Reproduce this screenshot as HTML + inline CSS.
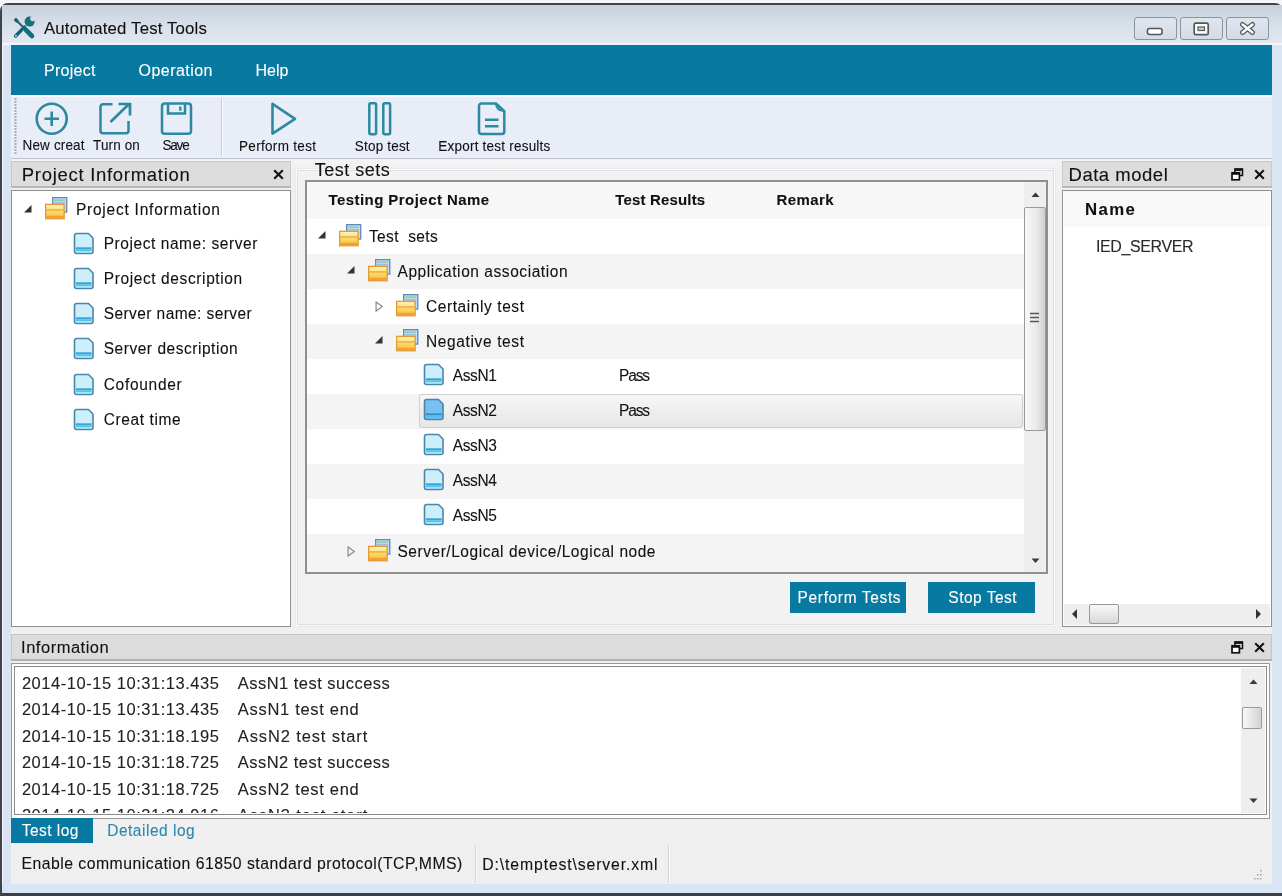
<!DOCTYPE html>
<html><head><meta charset="utf-8"><style>
html,body{margin:0;padding:0;width:1282px;height:896px;overflow:hidden;background:#f3f5f8}
body{position:relative;font-family:"Liberation Sans",sans-serif}
body div{position:absolute}
.t{white-space:pre;line-height:1}
</style></head><body>
<svg width="0" height="0" style="position:absolute"><defs><linearGradient id="fgr" x1="0" y1="0" x2="0" y2="1"><stop offset="0" stop-color="#fff4b8"/><stop offset="0.55" stop-color="#fbd860"/><stop offset="1" stop-color="#f5b840"/></linearGradient></defs></svg>
<div style="left:0px;top:0px;width:1282px;height:896px;background:#f3f5f8"></div>
<div style="left:0px;top:3px;width:1283px;height:900px;background:#dde7f3;border:2px solid #40454c;border-radius:8px 8px 0 0;box-sizing:border-box"></div>
<div style="left:2px;top:5px;width:1280px;height:40px;background:linear-gradient(#c6d0db,#d3dce6 35%,#e3e9f1)"></div>
<div style="left:2px;top:42.5px;width:1280px;height:2px;background:#f2f6fb"></div>
<div style="left:0px;top:893px;width:1282px;height:3px;background:#3c4048"></div>
<div style="left:2px;top:884px;width:1280px;height:9px;background:#d8e5f4"></div>
<svg style="position:absolute;left:8px;top:12px;" width="32" height="32" viewBox="0 0 32 32">
<defs><mask id="wm"><rect width="32" height="32" fill="#fff"/><circle cx="24.8" cy="6.6" r="2.6" fill="#000"/><path d="M24 5 L30 -1 L33 2 L27 8 Z" fill="#000"/></mask></defs>
<g stroke-linecap="round" fill="none">
<path d="M6.8 6.8 L9.6 9.6" stroke="#1d5f72" stroke-width="3.4" stroke-linecap="butt"/>
<path d="M9.5 9.5 L16.5 16.5" stroke="#1d6376" stroke-width="2"/>
<path d="M18 18 L24 24" stroke="#13707f" stroke-width="4.6"/>
<path d="M7.6 24 L16.5 15" stroke="#176478" stroke-width="3.4"/>
</g>
<circle cx="21.6" cy="9.6" r="5" fill="#17707f" mask="url(#wm)"/>
<path d="M16 13.5 L19 16.5 L17 18 L14.5 15.5Z" fill="#176478"/>
<circle cx="7.9" cy="23.7" r="0.9" fill="#cfe2ea"/>
</svg>
<div class="t" style="left:44.00px;top:20.58px;font-size:16.8px;letter-spacing:0.158px;font-weight:normal;color:#111;transform:scaleY(1.02);transform-origin:0 13.72px;-webkit-text-stroke:0.1px #111;">Automated Test Tools</div>
<div style="left:1134px;top:17px;width:43px;height:23px;background:linear-gradient(#dfe6ee,#d3dbe5);border:1px solid #8b939d;border-radius:3px;box-sizing:border-box"></div>
<div style="left:1180px;top:17px;width:43px;height:23px;background:linear-gradient(#dfe6ee,#d3dbe5);border:1px solid #8b939d;border-radius:3px;box-sizing:border-box"></div>
<div style="left:1226px;top:17px;width:43px;height:23px;background:linear-gradient(#dfe6ee,#d3dbe5);border:1px solid #8b939d;border-radius:3px;box-sizing:border-box"></div>
<svg style="position:absolute;left:1146px;top:27px;" width="18" height="9" viewBox="0 0 18 9"><rect x="1.5" y="1.5" width="14.5" height="6" rx="2" fill="#fff" stroke="#555" stroke-width="1.6"/></svg>
<svg style="position:absolute;left:1193px;top:22px;" width="17" height="14" viewBox="0 0 17 14"><rect x="1.2" y="1.2" width="14" height="11.5" rx="1.5" fill="#fff" stroke="#555" stroke-width="1.7"/><rect x="5" y="5" width="6.5" height="3.5" fill="#c9d0d8" stroke="#555" stroke-width="1.2"/></svg>
<svg style="position:absolute;left:1238px;top:21px;" width="19" height="15" viewBox="0 0 19 15"><path d="M4.5 3.5 L14.5 11.5 M14.5 3.5 L4.5 11.5" stroke="#5a5a5a" stroke-width="5" stroke-linecap="round"/><path d="M4.5 3.5 L14.5 11.5 M14.5 3.5 L4.5 11.5" stroke="#fff" stroke-width="2.4" stroke-linecap="round"/></svg>
<div style="left:11px;top:45px;width:1261px;height:50px;background:#0879a0"></div>
<div class="t" style="left:44.00px;top:62.96px;font-size:16px;letter-spacing:0.268px;font-weight:normal;color:#fff;transform:scaleY(1.02);transform-origin:0 13.04px;-webkit-text-stroke:0.1px #fff;">Project</div>
<div class="t" style="left:138.50px;top:62.96px;font-size:16px;letter-spacing:0.466px;font-weight:normal;color:#fff;transform:scaleY(1.02);transform-origin:0 13.04px;-webkit-text-stroke:0.1px #fff;">Operation</div>
<div class="t" style="left:255.40px;top:62.96px;font-size:16px;letter-spacing:0.029px;font-weight:normal;color:#fff;transform:scaleY(1.02);transform-origin:0 13.04px;-webkit-text-stroke:0.1px #fff;">Help</div>
<div style="left:11px;top:95px;width:1261px;height:63px;background:#e8edf8"></div>
<div style="left:11px;top:95px;width:1261px;height:1.5px;background:#f6f9fd"></div>
<div style="left:11px;top:157.5px;width:1261px;height:2px;background:#bfc4cc"></div>
<svg style="position:absolute;left:14px;top:98px;" width="4" height="58" viewBox="0 0 4 58"><rect x="0.5" y="0" width="2" height="2" fill="#a8adb4"/><rect x="0.5" y="3" width="2" height="2" fill="#a8adb4"/><rect x="0.5" y="6" width="2" height="2" fill="#a8adb4"/><rect x="0.5" y="9" width="2" height="2" fill="#a8adb4"/><rect x="0.5" y="12" width="2" height="2" fill="#a8adb4"/><rect x="0.5" y="15" width="2" height="2" fill="#a8adb4"/><rect x="0.5" y="18" width="2" height="2" fill="#a8adb4"/><rect x="0.5" y="21" width="2" height="2" fill="#a8adb4"/><rect x="0.5" y="24" width="2" height="2" fill="#a8adb4"/><rect x="0.5" y="27" width="2" height="2" fill="#a8adb4"/><rect x="0.5" y="30" width="2" height="2" fill="#a8adb4"/><rect x="0.5" y="33" width="2" height="2" fill="#a8adb4"/><rect x="0.5" y="36" width="2" height="2" fill="#a8adb4"/><rect x="0.5" y="39" width="2" height="2" fill="#a8adb4"/><rect x="0.5" y="42" width="2" height="2" fill="#a8adb4"/><rect x="0.5" y="45" width="2" height="2" fill="#a8adb4"/><rect x="0.5" y="48" width="2" height="2" fill="#a8adb4"/><rect x="0.5" y="51" width="2" height="2" fill="#a8adb4"/><rect x="0.5" y="54" width="2" height="2" fill="#a8adb4"/></svg>
<div style="left:221px;top:98px;width:1px;height:58px;background:#c6ccd5"></div>
<div style="left:222px;top:98px;width:1px;height:58px;background:#fbfcff"></div>
<svg style="position:absolute;left:34px;top:101px;" width="36" height="36" viewBox="0 0 36 36"><circle cx="17.7" cy="17.8" r="15" fill="none" stroke="#2b8aa0" stroke-width="2.6"/><path d="M17.7 10.5 V25 M10.5 17.8 H25" stroke="#2b8aa0" stroke-width="2.6"/></svg>
<svg style="position:absolute;left:97px;top:101px;" width="38" height="36" viewBox="0 0 38 36"><path d="M15.5 3.2 H6 a2.5 2.5 0 0 0 -2.5 2.5 V29.8 a2.5 2.5 0 0 0 2.5 2.5 H29 a2.5 2.5 0 0 0 2.5 -2.5 V20" fill="none" stroke="#2b8aa0" stroke-width="2.5"/><path d="M13.5 21 L31.5 3.5 M21.5 3 H33 V14.5" fill="none" stroke="#2b8aa0" stroke-width="2.7"/></svg>
<svg style="position:absolute;left:158px;top:101px;" width="36" height="36" viewBox="0 0 36 36"><rect x="4" y="2.5" width="29" height="30.2" rx="2.8" fill="none" stroke="#2b8aa0" stroke-width="2.5"/><path d="M10 2.8 V12.5 H27 V2.8" fill="none" stroke="#2b8aa0" stroke-width="2.5"/><path d="M22.3 5.5 V9.8" stroke="#2b8aa0" stroke-width="2.3"/></svg>
<svg style="position:absolute;left:268px;top:100px;" width="32" height="38" viewBox="0 0 32 38"><path d="M4.5 3.8 L27 18.8 L4.5 33.6 Z" fill="none" stroke="#2b8aa0" stroke-width="2.6" stroke-linejoin="round"/></svg>
<svg style="position:absolute;left:366px;top:100px;" width="28" height="38" viewBox="0 0 28 38"><rect x="3.3" y="3.3" width="6.8" height="31" rx="1.5" fill="none" stroke="#2b8aa0" stroke-width="2.5"/><rect x="17.3" y="3.3" width="6.8" height="31" rx="1.5" fill="none" stroke="#2b8aa0" stroke-width="2.5"/></svg>
<svg style="position:absolute;left:476px;top:100px;" width="32" height="38" viewBox="0 0 32 38"><path d="M5.5 3.5 H20 L28.3 11.2 V31.5 a2.5 2.5 0 0 1 -2.5 2.5 H5.5 a2.5 2.5 0 0 1 -2.5 -2.5 V6 a2.5 2.5 0 0 1 2.5 -2.5 Z" fill="none" stroke="#2b8aa0" stroke-width="2.5" stroke-linejoin="round"/><path d="M20 4 Q20.5 10.5 28 11" fill="none" stroke="#2b8aa0" stroke-width="2"/><path d="M9 19.8 H22.5 M9 26.2 H22.5" stroke="#2b8aa0" stroke-width="2.4"/></svg>
<div class="t" style="left:22.50px;top:138.67px;font-size:13.5px;letter-spacing:0.155px;font-weight:normal;color:#111;transform:scaleY(1.02);transform-origin:0 10.93px;-webkit-text-stroke:0.1px #111;">New creat</div>
<div class="t" style="left:93.00px;top:138.67px;font-size:13.5px;letter-spacing:0.130px;font-weight:normal;color:#111;transform:scaleY(1.02);transform-origin:0 10.93px;-webkit-text-stroke:0.1px #111;">Turn on</div>
<div class="t" style="left:162.40px;top:138.67px;font-size:13.5px;letter-spacing:-1.155px;font-weight:normal;color:#111;transform:scaleY(1.02);transform-origin:0 10.93px;-webkit-text-stroke:0.1px #111;">Save</div>
<div class="t" style="left:239.00px;top:140.07px;font-size:13.5px;letter-spacing:0.316px;font-weight:normal;color:#111;transform:scaleY(1.02);transform-origin:0 10.93px;-webkit-text-stroke:0.1px #111;">Perform test</div>
<div class="t" style="left:354.80px;top:140.07px;font-size:13.5px;letter-spacing:0.189px;font-weight:normal;color:#111;transform:scaleY(1.02);transform-origin:0 10.93px;-webkit-text-stroke:0.1px #111;">Stop test</div>
<div class="t" style="left:438.30px;top:140.07px;font-size:13.5px;letter-spacing:0.220px;font-weight:normal;color:#111;transform:scaleY(1.02);transform-origin:0 10.93px;-webkit-text-stroke:0.1px #111;">Export test results</div>
<div style="left:11px;top:159px;width:1261px;height:725px;background:#f0f0f0"></div>
<div style="left:11px;top:159.5px;width:1261px;height:9px;background:linear-gradient(#f3f4f7,#f0f1f3)"></div>
<div style="left:11px;top:161px;width:280px;height:26px;background:#dedcdc;border:1px solid #c8c8c8;box-sizing:border-box"></div>
<div style="left:11px;top:186px;width:280px;height:1.5px;background:#b8b8b8"></div>
<div class="t" style="left:21.80px;top:165.64px;font-size:18.5px;letter-spacing:0.707px;font-weight:normal;color:#111;transform:scaleY(1.02);transform-origin:0 15.16px;-webkit-text-stroke:0.1px #111;">Project Information</div>
<svg style="position:absolute;left:273px;top:169px;" width="11" height="11" viewBox="0 0 11 11"><path d="M1.2 1.2 L9.8 9.8 M9.8 1.2 L1.2 9.8" stroke="#111" stroke-width="2.1" fill="none"/></svg>
<div style="left:11px;top:190px;width:280px;height:437px;background:#fff;border:1.5px solid #8f8f8f;box-sizing:border-box"></div>
<svg style="position:absolute;left:23px;top:204px;" width="10" height="10" viewBox="0 0 10 10"><path d="M8.5 1 L8.5 8.5 L1 8.5 Z" fill="#333"/></svg>
<svg style="position:absolute;left:44px;top:196px;" width="24" height="24" viewBox="0 0 24 24">
<rect x="8.65" y="1.65" width="14.1" height="14.4" fill="#c6e2f8" stroke="#5f88b8" stroke-width="1.3"/>
<rect x="10" y="3.3" width="11.2" height="1.9" fill="#8fd0a8"/>
<rect x="10" y="6.2" width="11.2" height="1.3" fill="#90b4ea"/>
<rect x="10" y="8.6" width="11.2" height="1.3" fill="#90b4ea"/>
<rect x="1.65" y="8.35" width="18.5" height="14.4" fill="url(#fgr)" stroke="#e39a36" stroke-width="1.3"/>
<rect x="2.3" y="13.2" width="17.2" height="1.5" fill="#e8a040" opacity="0.8"/>
<rect x="2.3" y="19.8" width="17.2" height="2.3" fill="#f4a030"/>
</svg>
<div class="t" style="left:75.90px;top:202.08px;font-size:15.5px;letter-spacing:0.773px;font-weight:normal;color:#111;transform:scaleY(1.02);transform-origin:0 12.62px;-webkit-text-stroke:0.1px #111;">Project Information</div>
<svg style="position:absolute;left:73px;top:231.8px;" width="22" height="24" viewBox="0 0 22 24">
<path d="M3.5 1.5 H15.5 L20 6 V19.5 a2 2 0 0 1 -2 2 H3.5 a2 2 0 0 1 -2 -2 V3.5 a2 2 0 0 1 2 -2 Z" fill="#cdeefb" stroke="#4a86a8" stroke-width="1.6" stroke-linejoin="round"/>
<rect x="2.8" y="15.3" width="15.8" height="2" fill="#36a4d6"/>
<rect x="2.8" y="17.3" width="15.8" height="2" fill="#4cc6f0"/>
</svg>
<div class="t" style="left:103.70px;top:236.18px;font-size:15.5px;letter-spacing:0.563px;font-weight:normal;color:#111;transform:scaleY(1.02);transform-origin:0 12.62px;-webkit-text-stroke:0.1px #111;">Project name: server</div>
<svg style="position:absolute;left:73px;top:266.7px;" width="22" height="24" viewBox="0 0 22 24">
<path d="M3.5 1.5 H15.5 L20 6 V19.5 a2 2 0 0 1 -2 2 H3.5 a2 2 0 0 1 -2 -2 V3.5 a2 2 0 0 1 2 -2 Z" fill="#cdeefb" stroke="#4a86a8" stroke-width="1.6" stroke-linejoin="round"/>
<rect x="2.8" y="15.3" width="15.8" height="2" fill="#36a4d6"/>
<rect x="2.8" y="17.3" width="15.8" height="2" fill="#4cc6f0"/>
</svg>
<div class="t" style="left:103.70px;top:271.08px;font-size:15.5px;letter-spacing:0.611px;font-weight:normal;color:#111;transform:scaleY(1.02);transform-origin:0 12.62px;-webkit-text-stroke:0.1px #111;">Project description</div>
<svg style="position:absolute;left:73px;top:301.8px;" width="22" height="24" viewBox="0 0 22 24">
<path d="M3.5 1.5 H15.5 L20 6 V19.5 a2 2 0 0 1 -2 2 H3.5 a2 2 0 0 1 -2 -2 V3.5 a2 2 0 0 1 2 -2 Z" fill="#cdeefb" stroke="#4a86a8" stroke-width="1.6" stroke-linejoin="round"/>
<rect x="2.8" y="15.3" width="15.8" height="2" fill="#36a4d6"/>
<rect x="2.8" y="17.3" width="15.8" height="2" fill="#4cc6f0"/>
</svg>
<div class="t" style="left:103.70px;top:306.18px;font-size:15.5px;letter-spacing:0.421px;font-weight:normal;color:#111;transform:scaleY(1.02);transform-origin:0 12.62px;-webkit-text-stroke:0.1px #111;">Server name: server</div>
<svg style="position:absolute;left:73px;top:337px;" width="22" height="24" viewBox="0 0 22 24">
<path d="M3.5 1.5 H15.5 L20 6 V19.5 a2 2 0 0 1 -2 2 H3.5 a2 2 0 0 1 -2 -2 V3.5 a2 2 0 0 1 2 -2 Z" fill="#cdeefb" stroke="#4a86a8" stroke-width="1.6" stroke-linejoin="round"/>
<rect x="2.8" y="15.3" width="15.8" height="2" fill="#36a4d6"/>
<rect x="2.8" y="17.3" width="15.8" height="2" fill="#4cc6f0"/>
</svg>
<div class="t" style="left:103.70px;top:341.38px;font-size:15.5px;letter-spacing:0.534px;font-weight:normal;color:#111;transform:scaleY(1.02);transform-origin:0 12.62px;-webkit-text-stroke:0.1px #111;">Server description</div>
<svg style="position:absolute;left:73px;top:372.5px;" width="22" height="24" viewBox="0 0 22 24">
<path d="M3.5 1.5 H15.5 L20 6 V19.5 a2 2 0 0 1 -2 2 H3.5 a2 2 0 0 1 -2 -2 V3.5 a2 2 0 0 1 2 -2 Z" fill="#cdeefb" stroke="#4a86a8" stroke-width="1.6" stroke-linejoin="round"/>
<rect x="2.8" y="15.3" width="15.8" height="2" fill="#36a4d6"/>
<rect x="2.8" y="17.3" width="15.8" height="2" fill="#4cc6f0"/>
</svg>
<div class="t" style="left:103.70px;top:376.88px;font-size:15.5px;letter-spacing:0.702px;font-weight:normal;color:#111;transform:scaleY(1.02);transform-origin:0 12.62px;-webkit-text-stroke:0.1px #111;">Cofounder</div>
<svg style="position:absolute;left:73px;top:407.7px;" width="22" height="24" viewBox="0 0 22 24">
<path d="M3.5 1.5 H15.5 L20 6 V19.5 a2 2 0 0 1 -2 2 H3.5 a2 2 0 0 1 -2 -2 V3.5 a2 2 0 0 1 2 -2 Z" fill="#cdeefb" stroke="#4a86a8" stroke-width="1.6" stroke-linejoin="round"/>
<rect x="2.8" y="15.3" width="15.8" height="2" fill="#36a4d6"/>
<rect x="2.8" y="17.3" width="15.8" height="2" fill="#4cc6f0"/>
</svg>
<div class="t" style="left:103.70px;top:412.08px;font-size:15.5px;letter-spacing:0.613px;font-weight:normal;color:#111;transform:scaleY(1.02);transform-origin:0 12.62px;-webkit-text-stroke:0.1px #111;">Creat time</div>
<div style="left:296px;top:168.5px;width:759px;height:457px;background:#f2f2f2;border:1.5px solid #fbfbfb;box-shadow:inset 1px 1px 0 #dedede, inset -1px -1px 0 #dedede, 0 0 0 0.5px #e4e4e4;box-sizing:border-box"></div>
<div class="t" style="left:314.80px;top:161.06px;font-size:18px;letter-spacing:0.496px;font-weight:normal;color:#111;transform:scaleY(1.02);transform-origin:0 14.74px;-webkit-text-stroke:0.1px #111;">Test sets</div>
<div style="left:305px;top:180px;width:743px;height:394px;background:#fff;border:2px solid #8f8f8f;box-sizing:border-box"></div>
<div style="left:307px;top:182px;width:717px;height:37px;background:#f7f7f7"></div>
<div class="t" style="left:328.40px;top:191.70px;font-size:15px;letter-spacing:0.449px;font-weight:bold;color:#111;transform:scaleY(1.02);transform-origin:0 12.20px;-webkit-text-stroke:0.1px #111;">Testing Project Name</div>
<div class="t" style="left:615.20px;top:191.70px;font-size:15px;letter-spacing:0.175px;font-weight:bold;color:#111;transform:scaleY(1.02);transform-origin:0 12.20px;-webkit-text-stroke:0.1px #111;">Test Results</div>
<div class="t" style="left:776.50px;top:191.70px;font-size:15px;letter-spacing:0.387px;font-weight:bold;color:#111;transform:scaleY(1.02);transform-origin:0 12.20px;-webkit-text-stroke:0.1px #111;">Remark</div>
<div style="left:307px;top:219px;width:717px;height:35px;background:#ffffff"></div>
<div style="left:307px;top:254px;width:717px;height:35px;background:#f4f4f4"></div>
<div style="left:307px;top:289px;width:717px;height:35px;background:#ffffff"></div>
<div style="left:307px;top:324px;width:717px;height:35px;background:#f4f4f4"></div>
<div style="left:307px;top:359px;width:717px;height:35px;background:#ffffff"></div>
<div style="left:307px;top:394px;width:717px;height:35px;background:#f4f4f4"></div>
<div style="left:307px;top:429px;width:717px;height:35px;background:#ffffff"></div>
<div style="left:307px;top:464px;width:717px;height:35px;background:#f4f4f4"></div>
<div style="left:307px;top:499px;width:717px;height:35px;background:#ffffff"></div>
<div style="left:307px;top:534px;width:717px;height:38px;background:#f4f4f4"></div>
<div style="left:419px;top:394px;width:604px;height:34px;background:linear-gradient(#f6f6f6,#e6e6e6);border:1px solid #d0d0d0;border-radius:3px;box-sizing:border-box"></div>
<svg style="position:absolute;left:317.0px;top:230px;" width="10" height="10" viewBox="0 0 10 10"><path d="M8.5 1 L8.5 8.5 L1 8.5 Z" fill="#333"/></svg>
<svg style="position:absolute;left:338.0px;top:223px;" width="24" height="24" viewBox="0 0 24 24">
<rect x="8.65" y="1.65" width="14.1" height="14.4" fill="#c6e2f8" stroke="#5f88b8" stroke-width="1.3"/>
<rect x="10" y="3.3" width="11.2" height="1.9" fill="#8fd0a8"/>
<rect x="10" y="6.2" width="11.2" height="1.3" fill="#90b4ea"/>
<rect x="10" y="8.6" width="11.2" height="1.3" fill="#90b4ea"/>
<rect x="1.65" y="8.35" width="18.5" height="14.4" fill="url(#fgr)" stroke="#e39a36" stroke-width="1.3"/>
<rect x="2.3" y="13.2" width="17.2" height="1.5" fill="#e8a040" opacity="0.8"/>
<rect x="2.3" y="19.8" width="17.2" height="2.3" fill="#f4a030"/>
</svg>
<div class="t" style="left:369.00px;top:229.08px;font-size:15.5px;letter-spacing:0.359px;font-weight:normal;color:#111;transform:scaleY(1.02);transform-origin:0 12.62px;-webkit-text-stroke:0.1px #111;">Test  sets</div>
<svg style="position:absolute;left:345.5px;top:265px;" width="10" height="10" viewBox="0 0 10 10"><path d="M8.5 1 L8.5 8.5 L1 8.5 Z" fill="#333"/></svg>
<svg style="position:absolute;left:366.5px;top:258px;" width="24" height="24" viewBox="0 0 24 24">
<rect x="8.65" y="1.65" width="14.1" height="14.4" fill="#c6e2f8" stroke="#5f88b8" stroke-width="1.3"/>
<rect x="10" y="3.3" width="11.2" height="1.9" fill="#8fd0a8"/>
<rect x="10" y="6.2" width="11.2" height="1.3" fill="#90b4ea"/>
<rect x="10" y="8.6" width="11.2" height="1.3" fill="#90b4ea"/>
<rect x="1.65" y="8.35" width="18.5" height="14.4" fill="url(#fgr)" stroke="#e39a36" stroke-width="1.3"/>
<rect x="2.3" y="13.2" width="17.2" height="1.5" fill="#e8a040" opacity="0.8"/>
<rect x="2.3" y="19.8" width="17.2" height="2.3" fill="#f4a030"/>
</svg>
<div class="t" style="left:397.50px;top:264.08px;font-size:15.5px;letter-spacing:0.560px;font-weight:normal;color:#111;transform:scaleY(1.02);transform-origin:0 12.62px;-webkit-text-stroke:0.1px #111;">Application association</div>
<svg style="position:absolute;left:375.0px;top:301px;" width="10" height="12" viewBox="0 0 10 12"><path d="M1.1 1 L7.3 5.5 L1.1 10 Z" fill="none" stroke="#8a8a8a" stroke-width="1.2"/></svg>
<svg style="position:absolute;left:395.0px;top:293px;" width="24" height="24" viewBox="0 0 24 24">
<rect x="8.65" y="1.65" width="14.1" height="14.4" fill="#c6e2f8" stroke="#5f88b8" stroke-width="1.3"/>
<rect x="10" y="3.3" width="11.2" height="1.9" fill="#8fd0a8"/>
<rect x="10" y="6.2" width="11.2" height="1.3" fill="#90b4ea"/>
<rect x="10" y="8.6" width="11.2" height="1.3" fill="#90b4ea"/>
<rect x="1.65" y="8.35" width="18.5" height="14.4" fill="url(#fgr)" stroke="#e39a36" stroke-width="1.3"/>
<rect x="2.3" y="13.2" width="17.2" height="1.5" fill="#e8a040" opacity="0.8"/>
<rect x="2.3" y="19.8" width="17.2" height="2.3" fill="#f4a030"/>
</svg>
<div class="t" style="left:426.00px;top:299.08px;font-size:15.5px;letter-spacing:0.581px;font-weight:normal;color:#111;transform:scaleY(1.02);transform-origin:0 12.62px;-webkit-text-stroke:0.1px #111;">Certainly test</div>
<svg style="position:absolute;left:374.0px;top:335px;" width="10" height="10" viewBox="0 0 10 10"><path d="M8.5 1 L8.5 8.5 L1 8.5 Z" fill="#333"/></svg>
<svg style="position:absolute;left:395.0px;top:328px;" width="24" height="24" viewBox="0 0 24 24">
<rect x="8.65" y="1.65" width="14.1" height="14.4" fill="#c6e2f8" stroke="#5f88b8" stroke-width="1.3"/>
<rect x="10" y="3.3" width="11.2" height="1.9" fill="#8fd0a8"/>
<rect x="10" y="6.2" width="11.2" height="1.3" fill="#90b4ea"/>
<rect x="10" y="8.6" width="11.2" height="1.3" fill="#90b4ea"/>
<rect x="1.65" y="8.35" width="18.5" height="14.4" fill="url(#fgr)" stroke="#e39a36" stroke-width="1.3"/>
<rect x="2.3" y="13.2" width="17.2" height="1.5" fill="#e8a040" opacity="0.8"/>
<rect x="2.3" y="19.8" width="17.2" height="2.3" fill="#f4a030"/>
</svg>
<div class="t" style="left:426.00px;top:334.08px;font-size:15.5px;letter-spacing:0.629px;font-weight:normal;color:#111;transform:scaleY(1.02);transform-origin:0 12.62px;-webkit-text-stroke:0.1px #111;">Negative test</div>
<svg style="position:absolute;left:423px;top:363px;" width="22" height="24" viewBox="0 0 22 24">
<path d="M3.5 1.5 H15.5 L20 6 V19.5 a2 2 0 0 1 -2 2 H3.5 a2 2 0 0 1 -2 -2 V3.5 a2 2 0 0 1 2 -2 Z" fill="#cdeefb" stroke="#4a86a8" stroke-width="1.6" stroke-linejoin="round"/>
<rect x="2.8" y="15.3" width="15.8" height="2" fill="#36a4d6"/>
<rect x="2.8" y="17.3" width="15.8" height="2" fill="#4cc6f0"/>
</svg>
<div class="t" style="left:452.70px;top:368.38px;font-size:15.5px;letter-spacing:-0.337px;font-weight:normal;color:#111;transform:scaleY(1.02);transform-origin:0 12.62px;-webkit-text-stroke:0.1px #111;">AssN1</div>
<div class="t" style="left:619.00px;top:368.38px;font-size:15.5px;letter-spacing:-1.152px;font-weight:normal;color:#111;transform:scaleY(1.02);transform-origin:0 12.62px;-webkit-text-stroke:0.1px #111;">Pass</div>
<svg style="position:absolute;left:423px;top:398px;" width="22" height="24" viewBox="0 0 22 24">
<path d="M3.5 1.5 H15.5 L20 6 V19.5 a2 2 0 0 1 -2 2 H3.5 a2 2 0 0 1 -2 -2 V3.5 a2 2 0 0 1 2 -2 Z" fill="#78c0f0" stroke="#4a86a8" stroke-width="1.6" stroke-linejoin="round"/>
<rect x="2.8" y="15.3" width="15.8" height="2" fill="#2f8fcc"/>
<rect x="2.8" y="17.3" width="15.8" height="2" fill="#4cc0f2"/>
</svg>
<div class="t" style="left:452.70px;top:403.38px;font-size:15.5px;letter-spacing:-0.337px;font-weight:normal;color:#111;transform:scaleY(1.02);transform-origin:0 12.62px;-webkit-text-stroke:0.1px #111;">AssN2</div>
<div class="t" style="left:619.00px;top:403.38px;font-size:15.5px;letter-spacing:-1.152px;font-weight:normal;color:#111;transform:scaleY(1.02);transform-origin:0 12.62px;-webkit-text-stroke:0.1px #111;">Pass</div>
<svg style="position:absolute;left:423px;top:433px;" width="22" height="24" viewBox="0 0 22 24">
<path d="M3.5 1.5 H15.5 L20 6 V19.5 a2 2 0 0 1 -2 2 H3.5 a2 2 0 0 1 -2 -2 V3.5 a2 2 0 0 1 2 -2 Z" fill="#cdeefb" stroke="#4a86a8" stroke-width="1.6" stroke-linejoin="round"/>
<rect x="2.8" y="15.3" width="15.8" height="2" fill="#36a4d6"/>
<rect x="2.8" y="17.3" width="15.8" height="2" fill="#4cc6f0"/>
</svg>
<div class="t" style="left:452.70px;top:438.38px;font-size:15.5px;letter-spacing:-0.337px;font-weight:normal;color:#111;transform:scaleY(1.02);transform-origin:0 12.62px;-webkit-text-stroke:0.1px #111;">AssN3</div>
<svg style="position:absolute;left:423px;top:468px;" width="22" height="24" viewBox="0 0 22 24">
<path d="M3.5 1.5 H15.5 L20 6 V19.5 a2 2 0 0 1 -2 2 H3.5 a2 2 0 0 1 -2 -2 V3.5 a2 2 0 0 1 2 -2 Z" fill="#cdeefb" stroke="#4a86a8" stroke-width="1.6" stroke-linejoin="round"/>
<rect x="2.8" y="15.3" width="15.8" height="2" fill="#36a4d6"/>
<rect x="2.8" y="17.3" width="15.8" height="2" fill="#4cc6f0"/>
</svg>
<div class="t" style="left:452.70px;top:473.38px;font-size:15.5px;letter-spacing:-0.337px;font-weight:normal;color:#111;transform:scaleY(1.02);transform-origin:0 12.62px;-webkit-text-stroke:0.1px #111;">AssN4</div>
<svg style="position:absolute;left:423px;top:503px;" width="22" height="24" viewBox="0 0 22 24">
<path d="M3.5 1.5 H15.5 L20 6 V19.5 a2 2 0 0 1 -2 2 H3.5 a2 2 0 0 1 -2 -2 V3.5 a2 2 0 0 1 2 -2 Z" fill="#cdeefb" stroke="#4a86a8" stroke-width="1.6" stroke-linejoin="round"/>
<rect x="2.8" y="15.3" width="15.8" height="2" fill="#36a4d6"/>
<rect x="2.8" y="17.3" width="15.8" height="2" fill="#4cc6f0"/>
</svg>
<div class="t" style="left:452.70px;top:508.38px;font-size:15.5px;letter-spacing:-0.337px;font-weight:normal;color:#111;transform:scaleY(1.02);transform-origin:0 12.62px;-webkit-text-stroke:0.1px #111;">AssN5</div>
<svg style="position:absolute;left:346.5px;top:546px;" width="10" height="12" viewBox="0 0 10 12"><path d="M1.1 1 L7.3 5.5 L1.1 10 Z" fill="none" stroke="#8a8a8a" stroke-width="1.2"/></svg>
<svg style="position:absolute;left:366.5px;top:538px;" width="24" height="24" viewBox="0 0 24 24">
<rect x="8.65" y="1.65" width="14.1" height="14.4" fill="#c6e2f8" stroke="#5f88b8" stroke-width="1.3"/>
<rect x="10" y="3.3" width="11.2" height="1.9" fill="#8fd0a8"/>
<rect x="10" y="6.2" width="11.2" height="1.3" fill="#90b4ea"/>
<rect x="10" y="8.6" width="11.2" height="1.3" fill="#90b4ea"/>
<rect x="1.65" y="8.35" width="18.5" height="14.4" fill="url(#fgr)" stroke="#e39a36" stroke-width="1.3"/>
<rect x="2.3" y="13.2" width="17.2" height="1.5" fill="#e8a040" opacity="0.8"/>
<rect x="2.3" y="19.8" width="17.2" height="2.3" fill="#f4a030"/>
</svg>
<div class="t" style="left:397.50px;top:544.08px;font-size:15.5px;letter-spacing:0.533px;font-weight:normal;color:#111;transform:scaleY(1.02);transform-origin:0 12.62px;-webkit-text-stroke:0.1px #111;">Server/Logical device/Logical node</div>
<div style="left:1024px;top:182px;width:22px;height:390px;background:#eeeeee"></div>
<svg style="position:absolute;left:1029px;top:189px;" width="13" height="10" viewBox="0 0 13 10"><path d="M2.5 8 L6.5 3.5 L10.5 8 Z" fill="#3a3a3a"/></svg>
<svg style="position:absolute;left:1029px;top:556px;" width="13" height="10" viewBox="0 0 13 10"><path d="M2.5 2.5 L6.5 7 L10.5 2.5 Z" fill="#3a3a3a"/></svg>
<div style="left:1024px;top:207px;width:22px;height:224px;background:linear-gradient(90deg,#f8f8f8,#e8e8e8 60%,#cfcfcf);border:1px solid #9a9a9a;border-radius:2px;box-sizing:border-box"></div>
<svg style="position:absolute;left:1029px;top:312px;" width="11" height="12" viewBox="0 0 11 12"><path d="M1 1.5 H10 M1 5.5 H10 M1 9.5 H10" stroke="#555" stroke-width="1.4"/></svg>
<div style="left:790px;top:582px;width:116px;height:31px;background:#0879a0"></div>
<div class="t" style="left:797.60px;top:590.18px;font-size:15.5px;letter-spacing:0.640px;font-weight:normal;color:#fff;transform:scaleY(1.02);transform-origin:0 12.62px;-webkit-text-stroke:0.1px #fff;">Perform Tests</div>
<div style="left:928px;top:582px;width:107px;height:31px;background:#0879a0"></div>
<div class="t" style="left:948.30px;top:590.18px;font-size:15.5px;letter-spacing:0.495px;font-weight:normal;color:#fff;transform:scaleY(1.02);transform-origin:0 12.62px;-webkit-text-stroke:0.1px #fff;">Stop Test</div>
<div style="left:1062px;top:161px;width:210px;height:26px;background:#dedcdc;border:1px solid #c8c8c8;box-sizing:border-box"></div>
<div style="left:1062px;top:186px;width:210px;height:1.5px;background:#b8b8b8"></div>
<div class="t" style="left:1068.50px;top:165.74px;font-size:18.5px;letter-spacing:0.521px;font-weight:normal;color:#111;transform:scaleY(1.02);transform-origin:0 15.16px;-webkit-text-stroke:0.1px #111;">Data model</div>
<svg style="position:absolute;left:1231px;top:168px;" width="13" height="13" viewBox="0 0 13 13"><rect x="3.9" y="0.9" width="7.6" height="6.6" fill="none" stroke="#111" stroke-width="1.5"/><rect x="1" y="4.8" width="7.4" height="7" fill="#fff" stroke="#111" stroke-width="1.7"/><rect x="3.9" y="0.9" width="7.6" height="2" fill="#111"/><rect x="1" y="4.8" width="7.4" height="2" fill="#111"/></svg>
<svg style="position:absolute;left:1254px;top:169px;" width="11" height="11" viewBox="0 0 11 11"><path d="M1.2 1.2 L9.8 9.8 M9.8 1.2 L1.2 9.8" stroke="#111" stroke-width="2.1" fill="none"/></svg>
<div style="left:1062px;top:190px;width:210px;height:437px;background:#fff;border:1.5px solid #8f8f8f;box-sizing:border-box"></div>
<div style="left:1064px;top:191px;width:206px;height:36px;background:#f8f8f8"></div>
<div class="t" style="left:1085.10px;top:202.48px;font-size:16.8px;letter-spacing:1.346px;font-weight:bold;color:#111;transform:scaleY(1.02);transform-origin:0 13.72px;-webkit-text-stroke:0.1px #111;">Name</div>
<div class="t" style="left:1096.00px;top:239.16px;font-size:16px;letter-spacing:-0.397px;font-weight:normal;color:#2a2a2a;transform:scaleY(1.02);transform-origin:0 13.04px;-webkit-text-stroke:0.1px #2a2a2a;">IED_SERVER</div>
<div style="left:1064px;top:604px;width:206px;height:21px;background:#eeeeee"></div>
<svg style="position:absolute;left:1069px;top:607px;" width="10" height="14" viewBox="0 0 10 14"><path d="M8 2 L3 7 L8 12 Z" fill="#333"/></svg>
<svg style="position:absolute;left:1254px;top:607px;" width="10" height="14" viewBox="0 0 10 14"><path d="M2 2 L7 7 L2 12 Z" fill="#333"/></svg>
<div style="left:1089px;top:604px;width:30px;height:20px;background:linear-gradient(#f8f8f8,#d8d8d8);border:1px solid #9a9a9a;border-radius:2px;box-sizing:border-box"></div>
<div style="left:11px;top:634px;width:1261px;height:27px;background:#dcdcdc;border:1px solid #c4c4c4;box-sizing:border-box"></div>
<div style="left:11px;top:659px;width:1261px;height:1.5px;background:#b0b0b0"></div>
<div class="t" style="left:21.10px;top:639.33px;font-size:16.5px;letter-spacing:0.507px;font-weight:normal;color:#111;transform:scaleY(1.02);transform-origin:0 13.47px;-webkit-text-stroke:0.1px #111;">Information</div>
<svg style="position:absolute;left:1231px;top:641px;" width="13" height="13" viewBox="0 0 13 13"><rect x="3.9" y="0.9" width="7.6" height="6.6" fill="none" stroke="#111" stroke-width="1.5"/><rect x="1" y="4.8" width="7.4" height="7" fill="#fff" stroke="#111" stroke-width="1.7"/><rect x="3.9" y="0.9" width="7.6" height="2" fill="#111"/><rect x="1" y="4.8" width="7.4" height="2" fill="#111"/></svg>
<svg style="position:absolute;left:1254px;top:642px;" width="11" height="11" viewBox="0 0 11 11"><path d="M1.2 1.2 L9.8 9.8 M9.8 1.2 L1.2 9.8" stroke="#111" stroke-width="2.1" fill="none"/></svg>
<div style="left:11px;top:663px;width:1259px;height:156px;background:#fff;border:1.5px solid #9a9a9a;box-sizing:border-box"></div>
<div style="left:14px;top:666px;width:1253px;height:149px;background:#fff;border:1.5px solid #8a8a8a;box-sizing:border-box"></div>
<div style="left:16px;top:668px;width:1224px;height:145px;overflow:hidden">
<div class="t" style="left:5.90px;top:6.93px;font-size:16.5px;letter-spacing:0.531px;font-weight:normal;color:#222;transform:scaleY(1.02);transform-origin:0 13.47px;-webkit-text-stroke:0.1px #222;">2014-10-15 10:31:13.435</div>
<div class="t" style="left:221.80px;top:6.93px;font-size:16.5px;letter-spacing:0.473px;font-weight:normal;color:#222;transform:scaleY(1.02);transform-origin:0 13.47px;-webkit-text-stroke:0.1px #222;">AssN1 test success</div>
<div class="t" style="left:5.90px;top:33.43px;font-size:16.5px;letter-spacing:0.531px;font-weight:normal;color:#222;transform:scaleY(1.02);transform-origin:0 13.47px;-webkit-text-stroke:0.1px #222;">2014-10-15 10:31:13.435</div>
<div class="t" style="left:221.80px;top:33.43px;font-size:16.5px;letter-spacing:0.701px;font-weight:normal;color:#222;transform:scaleY(1.02);transform-origin:0 13.47px;-webkit-text-stroke:0.1px #222;">AssN1 test end</div>
<div class="t" style="left:5.90px;top:59.93px;font-size:16.5px;letter-spacing:0.531px;font-weight:normal;color:#222;transform:scaleY(1.02);transform-origin:0 13.47px;-webkit-text-stroke:0.1px #222;">2014-10-15 10:31:18.195</div>
<div class="t" style="left:221.80px;top:59.93px;font-size:16.5px;letter-spacing:0.870px;font-weight:normal;color:#222;transform:scaleY(1.02);transform-origin:0 13.47px;-webkit-text-stroke:0.1px #222;">AssN2 test start</div>
<div class="t" style="left:5.90px;top:86.43px;font-size:16.5px;letter-spacing:0.531px;font-weight:normal;color:#222;transform:scaleY(1.02);transform-origin:0 13.47px;-webkit-text-stroke:0.1px #222;">2014-10-15 10:31:18.725</div>
<div class="t" style="left:221.80px;top:86.43px;font-size:16.5px;letter-spacing:0.473px;font-weight:normal;color:#222;transform:scaleY(1.02);transform-origin:0 13.47px;-webkit-text-stroke:0.1px #222;">AssN2 test success</div>
<div class="t" style="left:5.90px;top:112.93px;font-size:16.5px;letter-spacing:0.531px;font-weight:normal;color:#222;transform:scaleY(1.02);transform-origin:0 13.47px;-webkit-text-stroke:0.1px #222;">2014-10-15 10:31:18.725</div>
<div class="t" style="left:221.80px;top:112.93px;font-size:16.5px;letter-spacing:0.701px;font-weight:normal;color:#222;transform:scaleY(1.02);transform-origin:0 13.47px;-webkit-text-stroke:0.1px #222;">AssN2 test end</div>
<div class="t" style="left:5.90px;top:139.43px;font-size:16.5px;letter-spacing:0.531px;font-weight:normal;color:#222;transform:scaleY(1.02);transform-origin:0 13.47px;-webkit-text-stroke:0.1px #222;">2014-10-15 10:31:24.916</div>
<div class="t" style="left:221.80px;top:139.43px;font-size:16.5px;letter-spacing:0.870px;font-weight:normal;color:#222;transform:scaleY(1.02);transform-origin:0 13.47px;-webkit-text-stroke:0.1px #222;">AssN3 test start</div>
</div>
<div style="left:1241px;top:668px;width:24px;height:145px;background:#eeeeee"></div>
<svg style="position:absolute;left:1247px;top:676px;" width="13" height="10" viewBox="0 0 13 10"><path d="M2.5 8 L6.5 3.5 L10.5 8 Z" fill="#3a3a3a"/></svg>
<svg style="position:absolute;left:1247px;top:796px;" width="13" height="10" viewBox="0 0 13 10"><path d="M2.5 2.5 L6.5 7 L10.5 2.5 Z" fill="#3a3a3a"/></svg>
<div style="left:1242px;top:707px;width:20px;height:22px;background:linear-gradient(90deg,#f8f8f8,#d4d4d4);border:1px solid #9a9a9a;border-radius:2px;box-sizing:border-box"></div>
<div style="left:11px;top:818px;width:82px;height:25px;background:#0879a0"></div>
<div class="t" style="left:21.70px;top:823.08px;font-size:15.5px;letter-spacing:0.470px;font-weight:normal;color:#fff;transform:scaleY(1.02);transform-origin:0 12.62px;-webkit-text-stroke:0.1px #fff;">Test log</div>
<div class="t" style="left:107.20px;top:823.08px;font-size:15.5px;letter-spacing:0.513px;font-weight:normal;color:#2a88ae;transform:scaleY(1.02);transform-origin:0 12.62px;-webkit-text-stroke:0.1px #2a88ae;">Detailed log</div>
<div style="left:11px;top:843px;width:1261px;height:41px;background:#efefef"></div>
<div class="t" style="left:21.40px;top:855.73px;font-size:15.8px;letter-spacing:0.481px;font-weight:normal;color:#111;transform:scaleY(1.02);transform-origin:0 12.87px;-webkit-text-stroke:0.1px #111;">Enable communication 61850 standard protocol(TCP,MMS)</div>
<div style="left:475px;top:845px;width:1px;height:38px;background:#d4d4d4"></div>
<div style="left:476px;top:845px;width:1px;height:38px;background:#fafafa"></div>
<div class="t" style="left:482.30px;top:857.13px;font-size:15.8px;letter-spacing:0.864px;font-weight:normal;color:#111;transform:scaleY(1.02);transform-origin:0 12.87px;-webkit-text-stroke:0.1px #111;">D:\temptest\server.xml</div>
<div style="left:668px;top:845px;width:1px;height:38px;background:#d4d4d4"></div>
<div style="left:669px;top:845px;width:1px;height:38px;background:#fafafa"></div>
<svg style="position:absolute;left:1250px;top:868px;" width="14" height="14" viewBox="0 0 14 14"><rect x="10" y="2" width="1.5" height="1.5" fill="#b0a090"/><rect x="7" y="6" width="1.5" height="1.5" fill="#b0a090"/><rect x="10" y="6" width="1.5" height="1.5" fill="#b0a090"/><rect x="4" y="10" width="1.5" height="1.5" fill="#b0a090"/><rect x="7" y="10" width="1.5" height="1.5" fill="#b0a090"/><rect x="10" y="10" width="1.5" height="1.5" fill="#b0a090"/></svg>
<div style="left:1272px;top:45px;width:10px;height:839px;background:#dae6f4"></div>
<div style="left:2px;top:45px;width:9px;height:839px;background:#d6e4f3"></div>
<div style="left:2px;top:45px;width:1.2px;height:839px;background:#f4f8fc"></div>
</body></html>
